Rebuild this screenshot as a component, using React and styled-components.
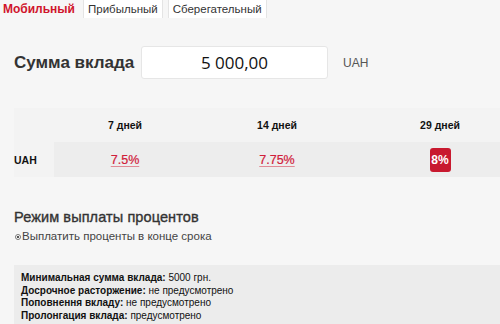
import styled, { createGlobalStyle } from 'styled-components';

const GlobalStyle = createGlobalStyle`
  html, body {
    margin: 0;
    padding: 0;
    background: #f6f6f6;
    font-family: "Liberation Sans", Arial, sans-serif;
    overflow: hidden;
  }
`;

const Page = styled.div`
  width: 500px;
  height: 324px;
  overflow: hidden;
`;

const TabBar = styled.div`
  display: flex;
  align-items: stretch;
  height: 18px;
  gap: 5px;
`;

const Tab = styled.div`
  display: flex;
  align-items: center;
  padding: ${p => (p.active ? '0 3px 0 3px' : '0 4px')};
  font-size: ${p => (p.active ? '12px' : '11.5px')};
  font-weight: ${p => (p.active ? 700 : 400)};
  color: ${p => (p.active ? '#d0142c' : '#333')};
  background: ${p => (p.active ? 'transparent' : '#fff')};
  border-left: ${p => (p.active ? 'none' : '1px solid #e4e4e4')};
  border-right: ${p => (p.active ? 'none' : '1px solid #e4e4e4')};
`;

const Content = styled.div`
  padding: 28px 0 0 14px;
`;

const AmountRow = styled.div`
  display: flex;
  align-items: center;
  height: 33px;
`;

const AmountLabel = styled.div`
  font-size: 17px;
  font-weight: 700;
  color: #333;
  width: 127px;
`;

const AmountInput = styled.div`
  box-sizing: border-box;
  width: 187px;
  height: 33px;
  background: #fff;
  border: 1px solid #e6e6e6;
  border-radius: 3px;
  display: flex;
  align-items: center;
  justify-content: center;
  font-family: "Open Sans", sans-serif;
  font-size: 17px;
  color: #111;
`;

const Currency = styled.div`
  margin-left: 15px;
  font-size: 12px;
  color: #555;
`;

const RateTable = styled.div`
  margin-top: 29px;
  width: 508px;
  display: grid;
  grid-template-columns: 40px 142px 162px 164px;
  background: #f3f3f3;
`;

const HeadCell = styled.div`
  height: 34px;
  display: flex;
  align-items: center;
  justify-content: center;
  font-size: 10.5px;
  font-weight: 700;
  color: #111;
`;

const RowLabel = styled.div`
  height: 35px;
  display: flex;
  align-items: center;
  font-size: 10.5px;
  font-weight: 700;
  color: #111;
`;

const RateCell = styled.div`
  height: 35px;
  display: flex;
  align-items: center;
  justify-content: center;
  background: #ededed;
`;

const RateLink = styled.a`
  font-size: 12.5px;
  color: #d0203a;
  -webkit-text-stroke: 0.2px #d0203a;
  text-decoration: underline;
  text-decoration-color: #e08a95;
  text-underline-offset: 2px;
`;

const RateBadge = styled.div`
  width: 21px;
  height: 24px;
  border-radius: 3px;
  background: #c8192f;
  color: #fff;
  font-size: 12px;
  font-weight: 700;
  display: flex;
  align-items: center;
  justify-content: center;
`;

const SectionTitle = styled.div`
  margin-top: 32px;
  font-size: 14.5px;
  color: #333;
  line-height: 16px;
  -webkit-text-stroke: 0.35px #333;
  letter-spacing: 0.1px;
`;

const RadioRow = styled.label`
  display: flex;
  align-items: center;
  margin-top: 4px;
  font-size: 11.5px;
  color: #444;
  line-height: 14px;
`;

const RadioDot = styled.span`
  box-sizing: border-box;
  width: 6px;
  height: 6px;
  margin: 1px 1px 0 1px;
  border-radius: 50%;
  border: 1px solid #777;
  background: radial-gradient(circle, #555 0 1px, #fff 1.2px);
`;

const InfoBox = styled.div`
  margin-top: 22px;
  width: 486px;
  box-sizing: border-box;
  padding: 7px 7px 8px;
  background: #ececec;
  font-size: 10px;
  line-height: 12.5px;
  color: #111;
`;

const InfoLine = styled.div`
  b {
    font-weight: 700;
  }
`;

const rates = [
  { term: '7 дней', value: '7.5%' },
  { term: '14 дней', value: '7.75%' },
  { term: '29 дней', value: '8%', best: true },
];

const info = [
  ['Минимальная сумма вклада:', '5000 грн.'],
  ['Досрочное расторжение:', 'не предусмотрено'],
  ['Поповнення вкладу:', 'не предусмотрено'],
  ['Пролонгация вклада:', 'предусмотрено'],
];

export default function App() {
  return (
    <Page>
      <GlobalStyle />
      <TabBar>
        <Tab active>Мобильный</Tab>
        <Tab>Прибыльный</Tab>
        <Tab>Сберегательный</Tab>
      </TabBar>
      <Content>
        <AmountRow>
          <AmountLabel>Сумма вклада</AmountLabel>
          <AmountInput>5 000,00</AmountInput>
          <Currency>UAH</Currency>
        </AmountRow>

        <RateTable>
          <HeadCell />
          {rates.map(r => (
            <HeadCell key={r.term}>{r.term}</HeadCell>
          ))}
          <RowLabel>UAH</RowLabel>
          {rates.map(r => (
            <RateCell key={r.term}>
              {r.best ? <RateBadge>{r.value}</RateBadge> : <RateLink>{r.value}</RateLink>}
            </RateCell>
          ))}
        </RateTable>

        <SectionTitle>Режим выплаты процентов</SectionTitle>
        <RadioRow>
          <RadioDot />
          Выплатить проценты в конце срока
        </RadioRow>

        <InfoBox>
          {info.map(([label, value]) => (
            <InfoLine key={label}>
              <b>{label}</b> {value}
            </InfoLine>
          ))}
        </InfoBox>
      </Content>
    </Page>
  );
}
